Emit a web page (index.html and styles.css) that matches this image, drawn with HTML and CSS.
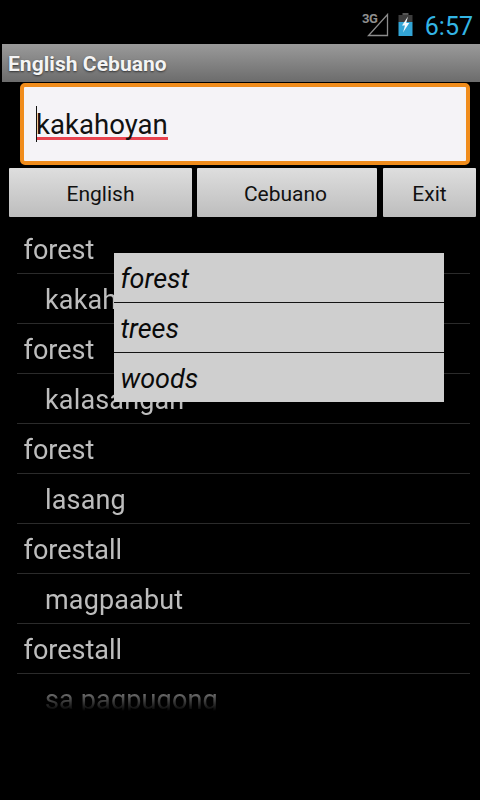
FILE: index.html
```html
<!DOCTYPE html>
<html lang="en">
<head>
<meta charset="utf-8">
<title>English Cebuano</title>
<link rel="stylesheet" href="styles.css">
</head>
<body>
<div class="screen">
  <header class="status">
    <span class="net">3G</span>
    <svg class="signal" width="22" height="24" viewBox="0 0 22 24" aria-hidden="true">
      <path d="M20.5 1.5 L20.5 22.5 L1.5 22.5 Z" fill="none" stroke="#8c8c8c" stroke-width="1.3"/>
    </svg>
    <svg class="battery" width="15" height="23" viewBox="0 0 15 23" aria-hidden="true">
      <rect x="4.5" y="0" width="6" height="2" fill="#555"/>
      <rect x="0.5" y="2" width="14" height="7" fill="#3d3d3d"/>
      <rect x="0.5" y="9" width="14" height="14" fill="#33a5d6"/>
      <path d="M10 3.5 L4 12.5 L7 12.5 L5 19.5 L11.3 10 L8.2 10 Z" fill="#f2f8fb"/>
    </svg>
    <span class="clock">6:57</span>
  </header>
  <div class="title">English Cebuano</div>
  <div class="field"><span class="typed"><span class="caret"></span>kakahoyan</span></div>
  <nav class="buttons">
    <button class="btn btn-en">English</button>
    <button class="btn btn-ceb">Cebuano</button>
    <button class="btn btn-exit">Exit</button>
  </nav>
  <ul class="list">
    <li class="row">forest</li>
    <li class="row sub">kakahoyan</li>
    <li class="row">forest</li>
    <li class="row sub">kalasangan</li>
    <li class="row">forest</li>
    <li class="row sub">lasang</li>
    <li class="row">forestall</li>
    <li class="row sub">magpaabut</li>
    <li class="row">forestall</li>
    <li class="row sub">sa pagpugong</li>
  </ul>
  <div class="popup">
    <div class="pop-item">forest</div>
    <div class="pop-item">trees</div>
    <div class="pop-item">woods</div>
  </div>
</div>
</body>
</html>
```
FILE: styles.css
```css
* { box-sizing: border-box; }
html, body { margin: 0; padding: 0; background: #000; }
.screen {
  position: relative;
  width: 480px;
  height: 800px;
  overflow: hidden;
  background: #000;
  font-family: Roboto, "Liberation Sans", sans-serif;
}
.status {
  position: relative;
  height: 44px;
  display: flex;
  align-items: center;
  justify-content: flex-end;
  padding-right: 7px;
}
.signal { margin-right: 9px; margin-top: 5px; }
.net {
  position: absolute;
  left: 362px;
  top: 11px;
  font-size: 13px;
  font-weight: 700;
  letter-spacing: -0.5px;
  color: #8f8f8f;
}
.battery { margin-right: 12px; margin-top: 5px; }
.clock { font-size: 25px; line-height: 44px; color: #33b5e5; margin-top: 10px; }
.title {
  height: 38px;
  margin-left: 2px;
  padding-left: 6px;
  background: linear-gradient(#9a9a9a, #6c6c6c);
  color: #f4f4f4;
  font-size: 21px;
  font-weight: 700;
  line-height: 41px;
  letter-spacing: 0.05px;
  text-shadow: 0 1px 2px #333;
}
.field {
  margin: 1px 10px 0 20px;
  height: 82px;
  border: 4px solid #f08c1c;
  border-radius: 5px;
  background: #f5f3f7;
  padding: 0 0 0 12px;
  display: flex;
  align-items: center;
}
.typed {
  position: relative;
  margin-top: 2px;
  font-size: 27.6px;
  line-height: 34px;
  color: #111;
  background: linear-gradient(#e8434f, #e8434f) left 29px / 100% 3px no-repeat;
}
.caret {
  position: absolute;
  left: 0;
  top: -2px;
  width: 1px;
  height: 36px;
  background: #111;
}
.buttons {
  display: flex;
  margin: 3px 4px 0 9px;
  gap: 5px;
  height: 49px;
}
.btn {
  border: 0;
  border-radius: 1px;
  padding: 2px 0 0;
  background: linear-gradient(#dedede, #bdbdbd);
  color: #111;
  font-family: inherit;
  font-size: 21px;
}
.btn-en { width: 183px; }
.btn-ceb { width: 180px; padding-right: 3px; margin-right: 1px; }
.btn-exit { width: 93px; }
.list {
  list-style: none;
  margin: 7px 10px 0 17px;
  padding: 0;
  height: 487px;
  overflow: hidden;
  -webkit-mask-image: linear-gradient(#000 calc(100% - 30px), transparent);
  mask-image: linear-gradient(#000 calc(100% - 30px), transparent);
}
.row {
  height: 50px;
  padding-left: 6.5px;
  border-bottom: 1px solid #2b2b2b;
  color: #bdbdbd;
  font-size: 27px;
  line-height: 52px;
}
.sub { padding-left: 28px; letter-spacing: 0.15px; }
.popup {
  position: absolute;
  left: 114px;
  top: 253px;
  width: 330px;
  background: #cfcfcf;
}
.pop-item {
  height: 50px;
  padding-left: 6.5px;
  border-bottom: 1px solid #141414;
  color: #0a0a0a;
  font-size: 27px;
  font-style: italic;
  line-height: 53px;
}
.pop-item:last-child { height: 49px; border-bottom: 0; }
```
